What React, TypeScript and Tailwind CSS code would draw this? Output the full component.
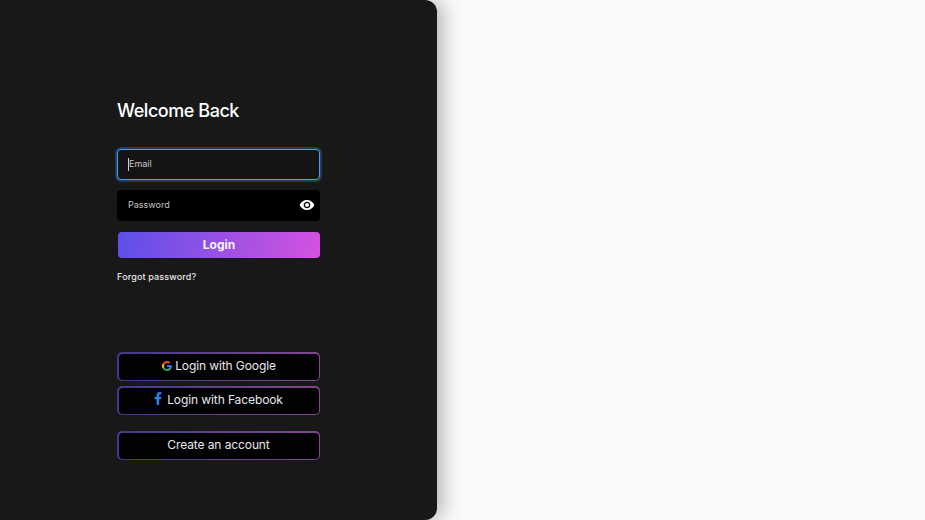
import { MdVisibility } from "react-icons/md";

const font = "font-['Inter','Liberation_Sans',sans-serif]";

function GoogleIcon() {
  return (
    <svg viewBox="0 0 24 24" className="w-[10px] h-[10px]">
      <path fill="#4285F4" d="M23.500 12.300c0-.8-.1-1.600-.2-2.300H12v4.500h6.500a5.500 5.500 0 0 1-2.400 3.600v3h3.900c2.200-2.100 3.500-5.200 3.500-8.800z" />
      <path fill="#34A853" d="M12 24c3.200 0 6-1.100 8-2.900l-3.900-3c-1.100.7-2.500 1.200-4.100 1.200-3.100 0-5.800-2.100-6.700-5H1.200v3.100A12 12 0 0 0 12 24z" />
      <path fill="#FBBC05" d="M5.300 14.300a7.200 7.200 0 0 1 0-4.600V6.600H1.200a12 12 0 0 0 0 10.800z" />
      <path fill="#EA4335" d="M12 4.800c1.800 0 3.300.6 4.600 1.800L20 3.200A12 12 0 0 0 1.200 6.600l4.100 3.100c.9-2.800 3.600-4.900 6.700-4.900z" />
    </svg>
  );
}

function FacebookIcon() {
  return (
    <svg viewBox="0 0 320 512" className="w-[8px] h-[13px] mb-[3px]" fill="#2f7bf0">
      <path d="M279 288l14-93h-89v-60c0-25 12-50 52-50h41V6s-37-6-72-6c-73 0-121 44-121 125v70H23v93h81v224h100V288z" />
    </svg>
  );
}

function OutlineButton({ children, className = "" }: { children: React.ReactNode; className?: string }) {
  return (
    <div className={`p-[1.5px] rounded-[5px] bg-gradient-to-r from-[#41398a] to-[#84478e] ${className}`}>
      <button className="w-full h-[26px] pb-[2px] rounded-[4px] bg-[#020204] flex items-center justify-center text-[12px] font-normal tracking-[-0.1px] text-[#e8e8e8]">
        {children}
      </button>
    </div>
  );
}

export default function App() {
  return (
    <div className={`h-screen bg-[#fafafa] overflow-hidden ${font}`}>
      {/* Left panel */}
      <div className="w-[437px] h-full bg-[#181818] rounded-r-xl shadow-[6px_0_20px_rgba(0,0,0,0.28)] pl-[117px] pt-[99px]">
        <div className="w-[203px] flex flex-col">
          <h1 className="text-[18px] leading-6 font-medium text-white tracking-[-0.45px]">Welcome Back</h1>

          <div className="relative mt-[26px]">
            <input
              placeholder="Email"
              className="w-full h-[31px] rounded-[4px] bg-[#141414] border border-[#4f9cf0] ring-2 ring-[#1f3c60] pl-[11px] pb-[2px] text-[9px] text-white placeholder:text-[#c4c4c4] outline-none"
            />
            <span className="absolute left-[11px] top-[9px] w-px h-[13px] bg-[#d0d0d0]" />
          </div>

          <div className="relative mt-[10px]">
            <input
              placeholder="Password"
              className="w-full h-[31px] rounded-[4px] bg-black pl-[11px] pr-8 pb-[2px] text-[9px] text-white placeholder:text-[#c4c4c4] outline-none"
            />
            <MdVisibility className="absolute right-[5px] top-[7px] w-4 h-4 text-white" />
          </div>

          <button className="mt-[11px] ml-px h-[26px] rounded-[4px] bg-[linear-gradient(100deg,#5b50e8,#d552e0)] text-[12px] font-bold text-[#f4f4f4] shadow-[0_0_0_1px_#1c1030]">
            Login
          </button>

          <a className="mt-[13px] text-[9px] leading-[12px] font-medium tracking-[0.15px] text-[#e8e8e8]">Forgot password?</a>

          <OutlineButton className="mt-[69px]">
            <span className="mr-[3px] ml-[1px]"><GoogleIcon /></span>
            Login with Google
          </OutlineButton>
          <OutlineButton className="mt-[5px]">
            <span className="mr-[5px]"><FacebookIcon /></span>
            Login with Facebook
          </OutlineButton>
          <OutlineButton className="mt-4">Create an account</OutlineButton>
        </div>
      </div>
    </div>
  );
}
